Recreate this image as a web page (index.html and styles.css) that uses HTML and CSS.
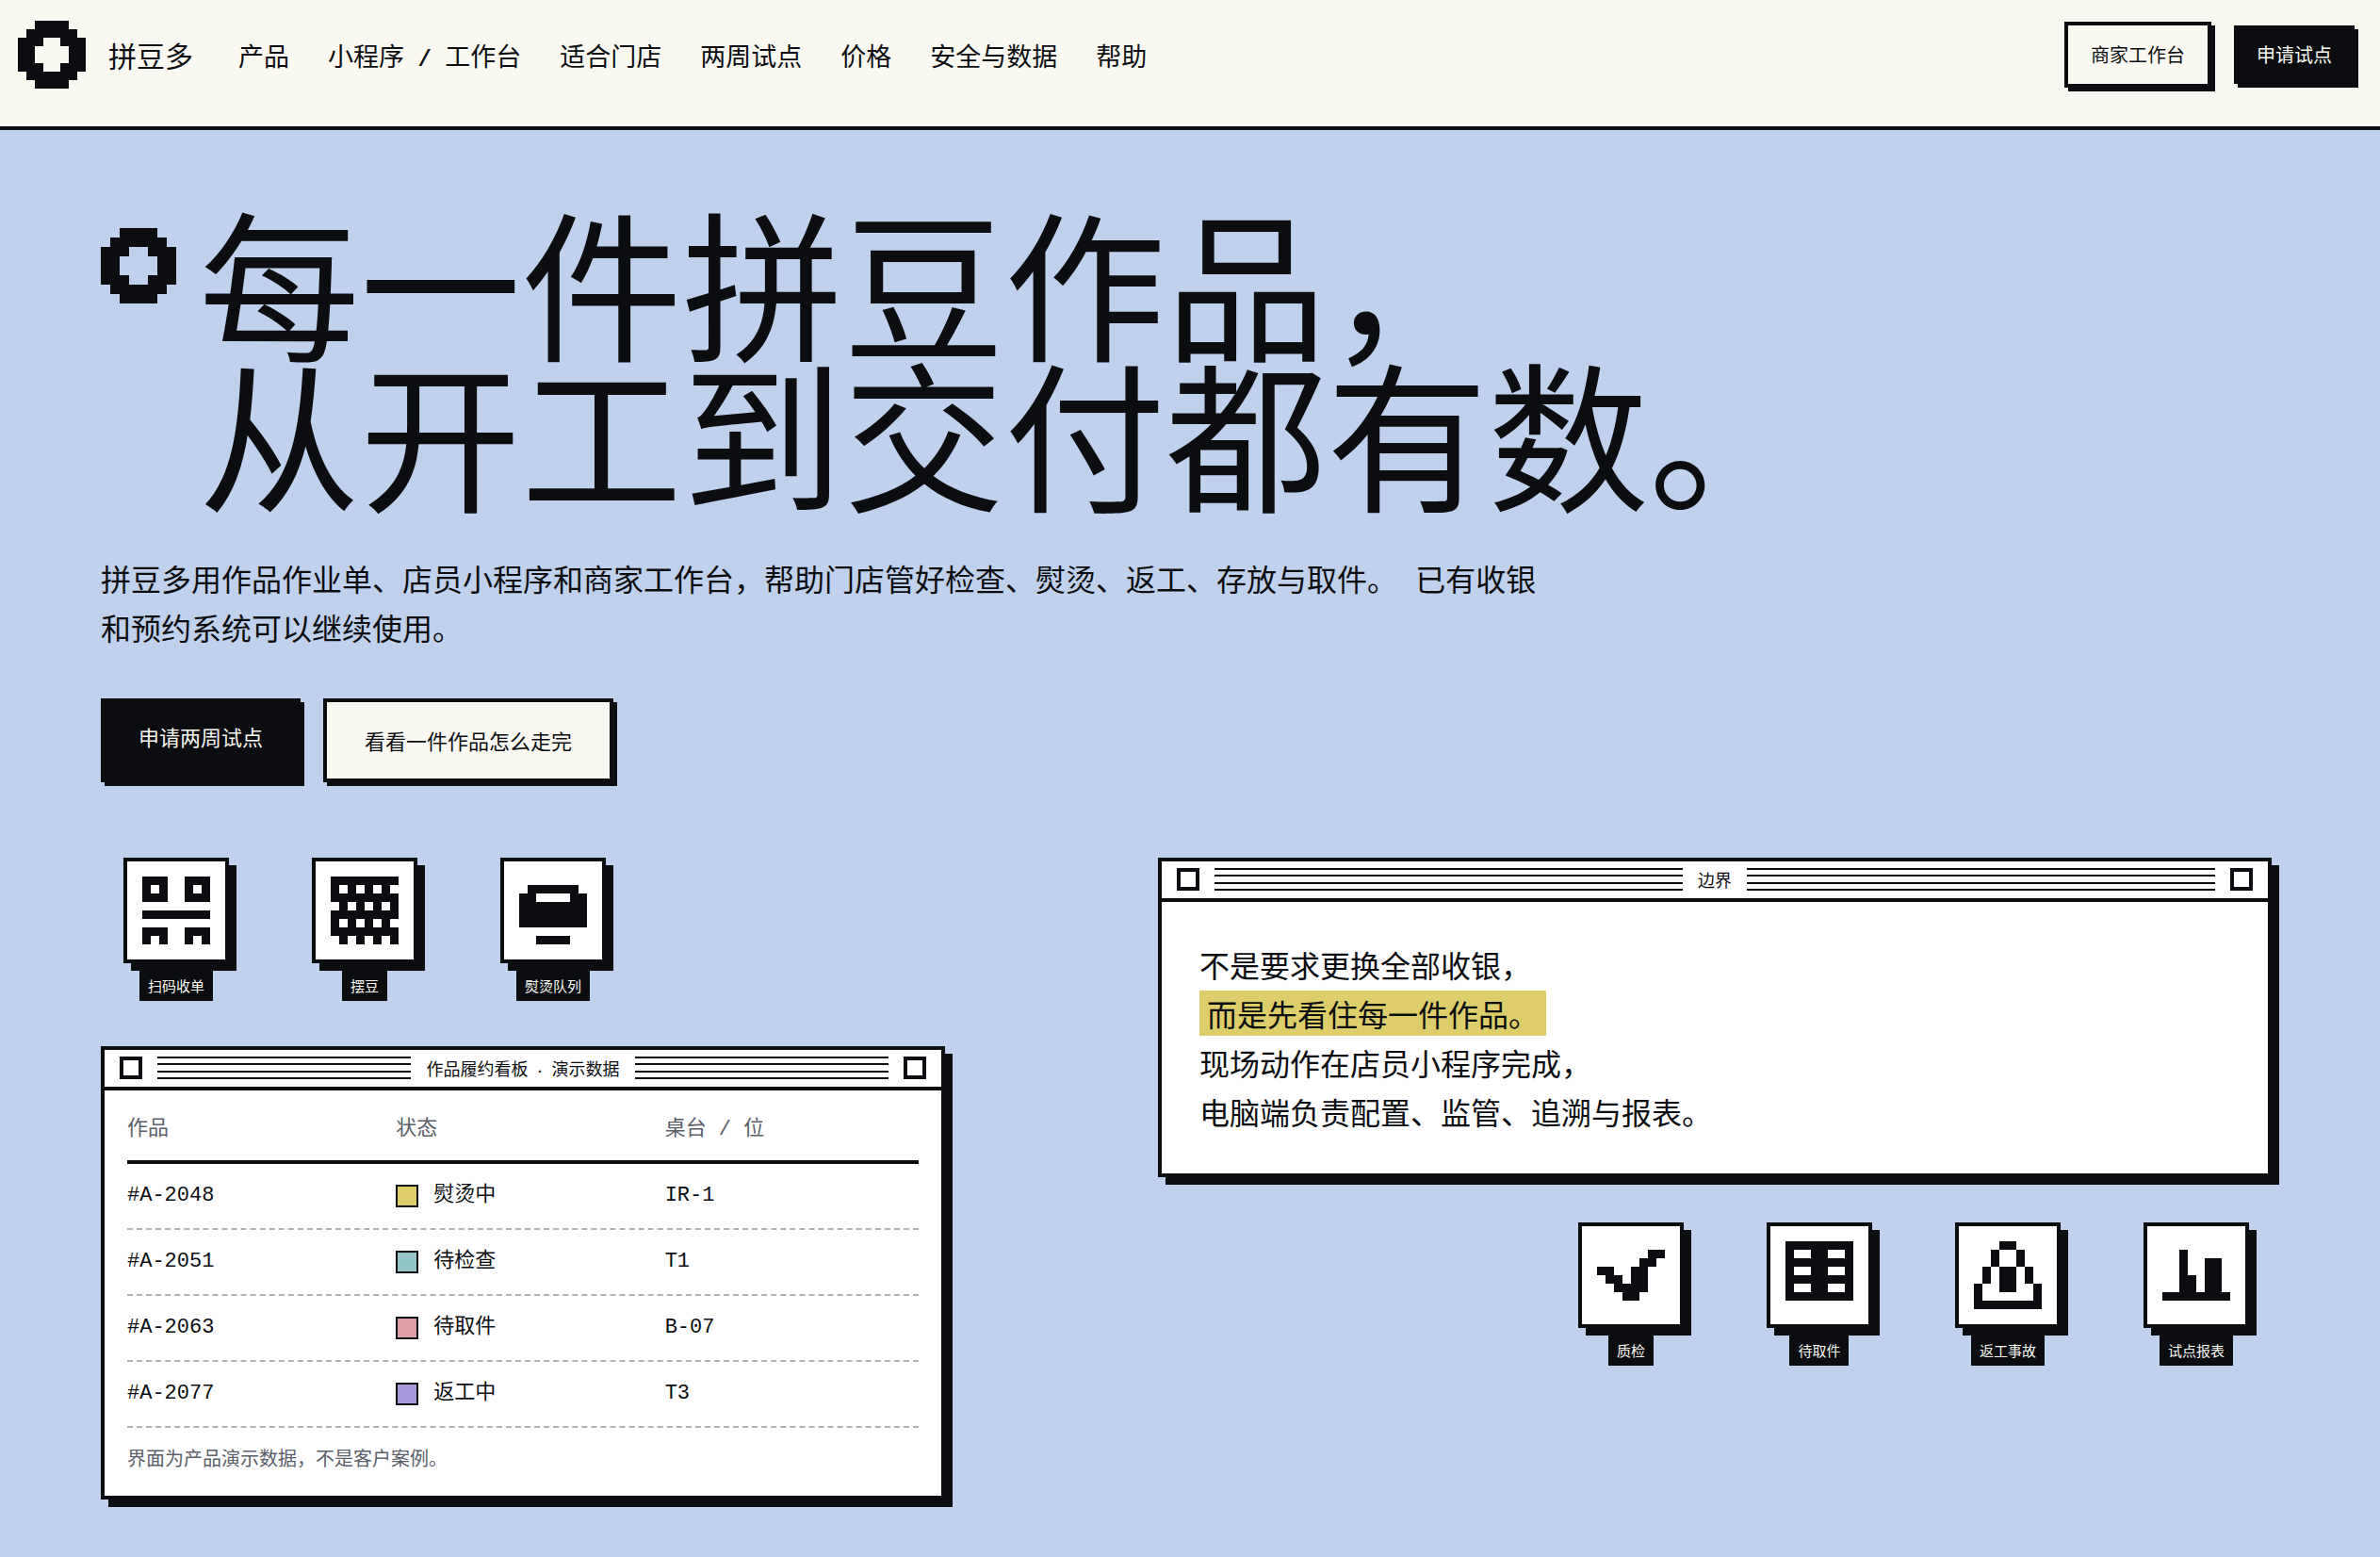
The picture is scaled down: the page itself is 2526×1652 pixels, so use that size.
FILE: index.html
```html
<!DOCTYPE html>
<html lang="zh-CN">
<head>
    <meta charset="utf-8">
    <meta name="viewport" content="width=device-width, initial-scale=1">
    <title>拼豆多</title>
    <link rel="stylesheet" href="styles.css">
</head>
<body>
    <header class="header">
        <a class="brand" href="#">
            <svg class="brand-mark" viewBox="0 0 8 8" aria-hidden="true"><path d="M2 0h4v1h1v1h1v4h-1v1h-1v1h-4v-1h-1v-1h-1v-4h1v-1h1zM3 2v1h-1v2h1v1h2v-1h1v-2h-1v-1z"/></svg>
            <span>拼豆多</span>
        </a>
        <nav class="nav">
            <a href="#">产品</a>
            <a href="#">小程序<span class="slash"> / </span>工作台</a>
            <a href="#">适合门店</a>
            <a href="#">两周试点</a>
            <a href="#">价格</a>
            <a href="#">安全与数据</a>
            <a href="#">帮助</a>
        </nav>
        <div class="header-actions">
            <a class="btn btn-small btn-light" href="#">商家工作台</a>
            <a class="btn btn-small btn-dark" href="#">申请试点</a>
        </div>
    </header>

    <main class="hero">
        <div class="wrap">
            <div class="headline">
                <svg class="headline-mark" viewBox="0 0 8 8" aria-hidden="true"><path d="M2 0h4v1h1v1h1v4h-1v1h-1v1h-4v-1h-1v-1h-1v-4h1v-1h1zM3 2v1h-1v2h1v1h2v-1h1v-2h-1v-1z"/></svg>
                <h1>每一件拼豆作品，<br>从开工到交付都有数。</h1>
            </div>
            <p class="lead">拼豆多用作品作业单、店员小程序和商家工作台，帮助门店管好检查、熨烫、返工、存放与取件。 已有收银和预约系统可以继续使用。</p>
            <div class="actions">
                <a class="btn btn-dark" href="#">申请两周试点</a>
                <a class="btn btn-light" href="#">看看一件作品怎么走完</a>
            </div>

            <div class="desktop">
                <div class="column">
                    <ul class="icons">
                        <li>
                            <span class="tile"><svg viewBox="0 0 8 8" aria-hidden="true"><path d="M0 0h3v3h-3zM1 1v1h1v-1zM5 0h3v3h-3zM6 1v1h1v-1zM0 4h8v1h-8zM0 6h3v2h-1v-1h-1v1h-1zM5 6h3v2h-1v-1h-1v1h-1z"/></svg></span>
                            <span class="label">扫码收单</span>
                        </li>
                        <li>
                            <span class="tile"><svg viewBox="0 0 8 8" aria-hidden="true"><path d="M0 0h8v1h-8zM0 2h8v1h-8zM0 4h8v1h-8zM0 6h8v1h-8zM0 1h1v1h-1zM2 1h1v1h-1zM4 1h1v1h-1zM6 1h1v1h-1zM1 3h1v1h-1zM3 3h1v1h-1zM5 3h1v1h-1zM7 3h1v1h-1zM0 5h1v1h-1zM2 5h1v1h-1zM4 5h1v1h-1zM6 5h1v1h-1zM1 7h1v1h-1zM3 7h1v1h-1zM5 7h1v1h-1zM7 7h1v1h-1z"/></svg></span>
                            <span class="label">摆豆</span>
                        </li>
                        <li>
                            <span class="tile"><svg viewBox="0 0 8 8" aria-hidden="true"><path d="M1 1h6v1h1v4h-8v-4h1zM2 2v1h4v-1zM2 7h4v1h-4z"/></svg></span>
                            <span class="label">熨烫队列</span>
                        </li>
                    </ul>

                    <section class="window board">
                        <div class="titlebar">
                            <i class="box"></i>
                            <div class="stripes"><i></i><i></i><i></i><i></i></div>
                            <h2>作品履约看板<span class="dot"> · </span>演示数据</h2>
                            <div class="stripes"><i></i><i></i><i></i><i></i></div>
                            <i class="box"></i>
                        </div>
                        <div class="board-body">
                            <table>
                                <thead>
                                    <tr><th>作品</th><th>状态</th><th>桌台 / 位</th></tr>
                                </thead>
                                <tbody>
                                    <tr><td>#A-2048</td><td><i class="swatch yellow"></i>熨烫中</td><td>IR-1</td></tr>
                                    <tr><td>#A-2051</td><td><i class="swatch teal"></i>待检查</td><td>T1</td></tr>
                                    <tr><td>#A-2063</td><td><i class="swatch pink"></i>待取件</td><td>B-07</td></tr>
                                    <tr><td>#A-2077</td><td><i class="swatch purple"></i>返工中</td><td>T3</td></tr>
                                </tbody>
                            </table>
                            <p class="note">界面为产品演示数据，不是客户案例。</p>
                        </div>
                    </section>
                </div>

                <div class="column">
                    <section class="window">
                        <div class="titlebar">
                            <i class="box"></i>
                            <div class="stripes"><i></i><i></i><i></i><i></i></div>
                            <h2>边界</h2>
                            <div class="stripes"><i></i><i></i><i></i><i></i></div>
                            <i class="box"></i>
                        </div>
                        <p class="statement">不是要求更换全部收银，<br><mark>而是先看住每一件作品。</mark><br>现场动作在店员小程序完成，<br>电脑端负责配置、监管、追溯与报表。</p>
                    </section>

                    <ul class="icons icons-right">
                        <li>
                            <span class="tile"><svg viewBox="0 0 8 8" aria-hidden="true"><path d="M6 1h2v1h-1v1h-1v3h-1v1h-2v-1h-1v-1h-1v-1h-1v-1h2v1h1v1h1v-2h1v-1h1z"/></svg></span>
                            <span class="label">质检</span>
                        </li>
                        <li>
                            <span class="tile"><svg viewBox="0 0 8 8" aria-hidden="true"><path d="M0 0h8v7h-8zM1 1v1h2v-1zM5 1v1h2v-1zM1 3v1h2v-1zM5 3v1h2v-1zM1 5v1h2v-1zM5 5v1h2v-1z"/></svg></span>
                            <span class="label">待取件</span>
                        </li>
                        <li>
                            <span class="tile"><svg viewBox="0 0 8 8" aria-hidden="true"><path d="M3 0h2v1h-2zM2 1h1v2h-1zM5 1h1v2h-1zM1 3h1v2h-1zM6 3h1v2h-1zM3 3h2v3h-2zM0 5h1v2h6v-2h1v3h-8z"/></svg></span>
                            <span class="label">返工事故</span>
                        </li>
                        <li>
                            <span class="tile"><svg viewBox="0 0 8 8" aria-hidden="true"><path d="M2 1h1v3h1v2h1v-4h2v4h1v1h-8v-1h2z"/></svg></span>
                            <span class="label">试点报表</span>
                        </li>
                    </ul>
                </div>
            </div>
        </div>
    </main>
</body>
</html>
```
FILE: styles.css
```css
:root{
    --ink: #0b0d11;
    --paper: #f9f9f1;
    --sky: #c0d1ed;
    --muted: #5b5f69;
    --yellow: #decd6b;
    --mono: "Liberation Mono", "Noto Sans CJK SC", monospace;
}
*{
    box-sizing: border-box;
}
body{
    margin: 0;
    background: var(--sky);
    color: var(--ink);
    font-family: "Noto Sans CJK SC", sans-serif;
    font-size: 22px;
}
a{
    color: inherit;
    text-decoration: none;
}
h1, h2, p, ul{
    margin: 0;
    padding: 0;
    font-weight: 400;
}
svg{
    display: block;
    fill: currentColor;
    fill-rule: evenodd;
    shape-rendering: crispEdges;
}

/* header */
.header{
    display: flex;
    align-items: center;
    padding: 22px 27px 40px 19px;
    background: var(--paper);
    border-bottom: 4px solid var(--ink);
}
.brand{
    display: flex;
    align-items: center;
    gap: 24px;
    font-size: 30px;
}
.brand-mark{
    width: 72px;
    height: 72px;
}
.nav{
    display: flex;
    gap: 41px;
    margin-left: 48px;
    font-size: 27px;
}
.slash{
    font-family: var(--mono);
    font-size: 24px;
    font-weight: 700;
    line-height: 1;
    white-space: pre;
}
.header-actions{
    display: flex;
    align-items: center;
    gap: 24px;
    margin-left: auto;
}

.btn{
    padding: 24px 40px;
    line-height: 33px;
    box-shadow: 4px 4px 0 var(--ink);
}
.btn-dark{
    background: var(--ink);
    color: var(--paper);
}
.btn-light{
    background: var(--paper);
    border: 4px solid var(--ink);
}
.btn-small{
    padding: 16px 24px;
    font-size: 20px;
    line-height: 30px;
}

/* hero */
.hero{
    padding: 78px 8px 52px 0;
}
.wrap{
    max-width: 2304px;
    margin: 0 auto;
}
.headline{
    display: flex;
    align-items: flex-start;
    gap: 24px;
}
.headline-mark{
    flex: none;
    width: 80px;
    height: 80px;
    margin-top: 26px;
}
h1{
    font-size: 171px;
    line-height: 160px;
}
.lead{
    max-width: 1536px;
    margin-top: 57px;
    font-family: var(--mono);
    font-size: 32px;
    line-height: 52px;
}
.actions{
    display: flex;
    gap: 24px;
    margin-top: 44px;
}

.desktop{
    display: grid;
    grid-template-columns: 48.7% 51.3%;
    margin-top: 80px;
}
.column{
    display: flex;
    flex-direction: column;
    gap: 48px;
}
.icons{
    display: flex;
    gap: 40px;
    list-style: none;
}
.icons-right{
    justify-content: flex-end;
}
.icons li{
    display: flex;
    flex-direction: column;
    align-items: center;
    gap: 8px;
    width: 160px;
}
.tile{
    padding: 16px;
    background: #fff;
    border: 4px solid var(--ink);
    box-shadow: 8px 8px 0 var(--ink);
}
.tile svg{
    width: 72px;
    height: 72px;
}
.label{
    padding: 4px 9px;
    background: var(--ink);
    color: var(--paper);
    font-size: 15px;
    line-height: 24px;
}

/* windows */
.window{
    background: #fff;
    border: 4px solid var(--ink);
    box-shadow: 8px 8px 0 var(--ink);
}
.board{
    max-width: 896px;
}
.titlebar{
    display: flex;
    align-items: center;
    gap: 16px;
    padding: 7px 16px 8px;
    border-bottom: 4px solid var(--ink);
}
.titlebar h2{
    font-size: 18px;
    line-height: 24px;
}
.dot{
    font-family: var(--mono);
    font-size: 14px;
    font-weight: 700;
    line-height: 1;
    white-space: pre;
}
.box{
    width: 24px;
    height: 24px;
    border: 4px solid var(--ink);
}
.stripes{
    flex: 1;
    display: flex;
    flex-direction: column;
    justify-content: space-between;
    height: 24px;
}
.stripes i{
    height: 2px;
    background: var(--ink);
}

.board-body{
    padding: 10px 24px 24px;
}
table, thead, tbody{
    display: block;
}
table{
    font-family: var(--mono);
}
tr{
    display: grid;
    grid-template-columns: repeat(3, 1fr);
    column-gap: 16px;
    padding: 16px 0;
    border-bottom: 2px dashed #b3b3b3;
    line-height: 36px;
}
thead tr{
    border-bottom: 4px solid var(--ink);
    color: var(--muted);
    line-height: 32px;
}
th, td{
    display: flex;
    align-items: center;
    padding: 0;
    font-weight: 400;
    white-space: pre;
}
.swatch{
    width: 24px;
    height: 24px;
    margin-right: 16px;
    border: 2px solid var(--ink);
}
.yellow{
    background: var(--yellow);
}
.teal{
    background: #93c5c8;
}
.pink{
    background: #de9ea8;
}
.purple{
    background: #a997dc;
}
.note{
    margin-top: 16px;
    color: var(--muted);
    font-size: 20px;
    line-height: 32px;
}
.statement{
    padding: 40px;
    font-size: 32px;
    line-height: 52px;
}
mark{
    display: inline-block;
    margin: 2px 0;
    padding: 0 8px;
    background: var(--yellow);
    color: inherit;
    line-height: 48px;
    vertical-align: top;
}
```
